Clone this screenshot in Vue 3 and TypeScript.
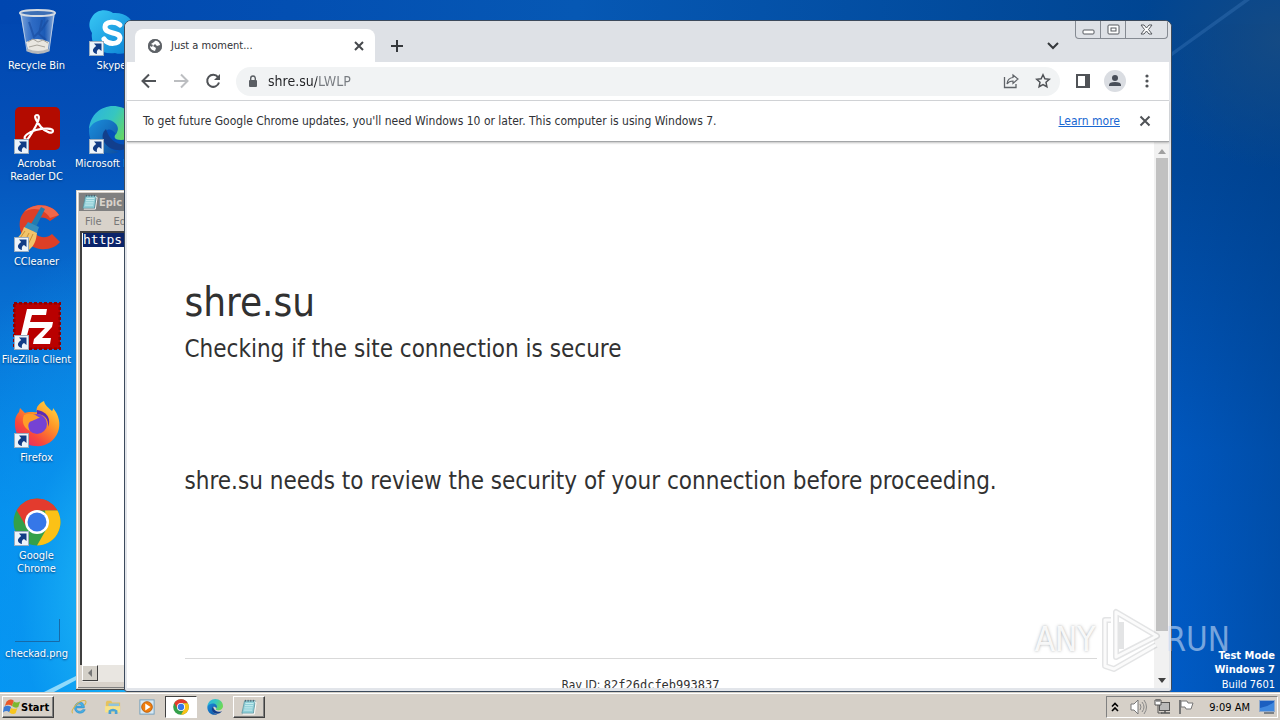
<script setup lang="ts">
import { ref } from 'vue'

interface Shortcut {
  label: string
  icon: string
  arrow: boolean
}

const columns: Shortcut[][] = [
  [
    { label: 'Recycle Bin', icon: 'bin', arrow: false },
    { label: 'Acrobat Reader DC', icon: 'acrobat', arrow: true },
    { label: 'CCleaner', icon: 'ccleaner', arrow: true },
    { label: 'FileZilla Client', icon: 'filezilla', arrow: true },
    { label: 'Firefox', icon: 'firefox', arrow: true },
    { label: 'Google Chrome', icon: 'chrome', arrow: true },
    { label: 'checkad.png', icon: 'blank', arrow: false },
  ],
  [
    { label: 'Skype', icon: 'skype', arrow: true },
    { label: 'Microsoft Edge', icon: 'edge', arrow: true },
  ],
]

const quickLaunch = [
  { name: 'Internet Explorer', icon: 'ie', state: '' },
  { name: 'Windows Explorer', icon: 'folder', state: '' },
  { name: 'Windows Media Player', icon: 'media', state: '' },
  { name: 'Google Chrome', icon: 'chrome', state: 'pressed' },
  { name: 'Microsoft Edge', icon: 'edge', state: '' },
  { name: 'Notepad', icon: 'notepad', state: 'raised' },
]

const address = ref('shre.su/LWLP')
const note = ref('https')
</script>

<template>
  <svg class="defs" width="0" height="0" aria-hidden="true">
    <defs>
      <linearGradient id="gGlass" x1="0" x2="1" y1="0" y2="0">
        <stop offset="0" stop-color="#a9c4e6" stop-opacity=".8" />
        <stop offset=".35" stop-color="#5c8fd8" stop-opacity=".5" />
        <stop offset=".7" stop-color="#2d66b8" stop-opacity=".6" />
        <stop offset="1" stop-color="#c3d6ee" stop-opacity=".8" />
      </linearGradient>
      <linearGradient id="gEdge" x1="0" x2="1" y1="0" y2=".4">
        <stop offset="0" stop-color="#2bb0e4" />
        <stop offset=".55" stop-color="#36c6c0" />
        <stop offset="1" stop-color="#6bd85a" />
      </linearGradient>
      <linearGradient id="gEdgeB" x1="0" x2="1" y1="0" y2="1">
        <stop offset="0" stop-color="#1b8fdc" />
        <stop offset="1" stop-color="#0f4fa0" />
      </linearGradient>
      <linearGradient id="gFox" x1="1" x2=".2" y1="0" y2="1">
        <stop offset="0" stop-color="#ffe84a" />
        <stop offset=".4" stop-color="#ff9a28" />
        <stop offset=".75" stop-color="#f8483c" />
        <stop offset="1" stop-color="#e4286a" />
      </linearGradient>
      <linearGradient id="gSkype" x1="0" x2="1" y1="0" y2="1">
        <stop offset="0" stop-color="#38c8f4" />
        <stop offset="1" stop-color="#0a80d4" />
      </linearGradient>
      <symbol id="i-bin" viewBox="0 0 48 48">
        <path d="M7 5h35l-6 37q-11 5-22 0z" fill="url(#gGlass)" />
        <path d="M13 34q11-6 23 0l-1 8q-10 4-20 0z" fill="#e9e6e0" />
        <path d="M15 34l5-3 5 3 5-2 5 3M16 39l8-2 8 2" fill="none" stroke="#a8a49c" />
        <path d="M16 14l5 15 8-8 6-9M29 12l-3 14 7 6" stroke="#174a9d" stroke-width="2" fill="none" opacity=".6" />
        <ellipse cx="24.500" cy="5" rx="17.500" ry="3" fill="#3d6fb5" stroke="#d5dbe2" stroke-width="2" />
        <path d="M8 6l6 37M41 6l-5 37" stroke="#cfdbea" opacity=".8" />
        <path d="M14 42q11 5 22 0" fill="none" stroke="#b7b9bb" stroke-width="3" />
      </symbol>
      <symbol id="i-acrobat" viewBox="0 0 48 48">
        <rect x="2" y="1" width="45" height="43" rx="5" fill="#b30b00" />
        <path d="M12 33c-2-2 3-7 11-9s17-2 17 1-7 2-12-4-8-12-4-12 1 8-4 16-6 10-8 8z" fill="none" stroke="#fff" stroke-width="2.200" />
      </symbol>
      <symbol id="i-ccleaner" viewBox="0 0 48 48">
        <path d="M46 11C39-1 20-2 11 8 1 19 9 42 27 45c9 1 16-2 20-7l-8-8c-7 6-17 3-19-5-2-9 8-16 17-8z" fill="#dc3f27" />
        <path d="M46 11C39-1 20-2 11 8c8-5 20-4 26 6z" fill="#f0674a" />
        <path d="M28 3l4 2-9 18-5-3z" fill="#227cb1" />
        <path d="M15 18l11 5-2 6-13-5z" fill="#368fbe" />
        <path d="M11 23l13 6c-1 7-2 12-8 17-7 0-12-5-15-10 5-2 8-7 10-13z" fill="#f2c469" />
        <path d="M12 27l-7 10M16 29l-6 12M20 30l-6 13" stroke="#c98f35" />
      </symbol>
      <symbol id="i-filezilla" viewBox="0 0 48 48">
        <rect x="1" y="1" width="46" height="46" fill="#b90000" stroke="#8f0000" stroke-width="3" stroke-dasharray="3 2" />
        <path d="M14 7h20l-1 6H19l-2 7h11l-2 6H16l-4 15H6z" fill="#fff" />
        <path d="M26 20h14l-1 5-10 11h9l-1 6H20l1-5 11-11h-7z" fill="#fff" />
      </symbol>
      <symbol id="i-firefox" viewBox="0 0 48 48">
        <path d="M31 1c1 5 5 7 8 10 1-1 1-2 1-3 6 7 8 16 5 24-4 10-13 15-23 14C9 45 1 34 2 22c0-5 2-8 4-10l1-4 5 5c5-2 10 0 12-1-2-5 3-9 7-11z" fill="url(#gFox)" />
        <circle cx="24" cy="24" r="10" fill="#7542d4" />
        <path d="M11 15c7-3 12 0 16 3-3 0-5 2-8 3-5 1-4 7-2 10-6-3-9-9-6-16z" fill="#ff9d28" />
        <path d="M24 14c7 0 12 5 11 13 3-6 1-15-11-17z" fill="#5c2bb5" />
      </symbol>
      <symbol id="i-chrome" viewBox="0 0 48 48">
        <circle cx="24" cy="24" r="23.500" fill="#34a04a" />
        <path d="M3.700 12.200A23.500 23.500 0 0 1 44.500 12.500H24L14 30z" fill="#e33b2e" />
        <path d="M44.500 12.500A23.500 23.500 0 0 1 24 47.500L34 30l-2-17.500z" fill="#fbc116" />
        <circle cx="24" cy="24" r="12" fill="#fff" />
        <circle cx="24" cy="24" r="9.500" fill="#3677e8" />
      </symbol>
      <symbol id="i-blank" viewBox="0 0 48 48">
        <path d="M2 45.500H46.500V23" fill="none" stroke="#176aa8" stroke-width="1" />
      </symbol>
      <symbol id="i-skype" viewBox="0 0 48 48">
        <path d="M4 9C9 1 19 1 25 5c14-1 23 8 21 21 4 12-7 23-19 19C12 47 2 37 4 25 0 19 1 13 4 9z" fill="url(#gSkype)" />
        <path d="M32 17c-4-4-15-4-15 2 0 8 15 4 15 11 0 7-12 7-16 1" fill="none" stroke="#fff" stroke-width="5" stroke-linecap="round" />
      </symbol>
      <symbol id="i-edge" viewBox="0 0 48 48">
        <path d="M1 23C2 9 13 0 25 0c13 0 23 9 23 21 0 8-7 13-15 13-6 0-8-3-5-6 5-9-8-20-27-5z" fill="url(#gEdge)" />
        <path d="M1 23c5-10 20-13 27-5 3 4 2 7 0 10-3-4-7-6-10-3-7 8 3 20 13 21C14 52 0 39 1 23z" fill="url(#gEdgeB)" />
        <path d="M18 23c-8 7-1 20 11 21 7 1 13-3 16-8-11 6-23 1-27-13z" fill="#123f8c" />
      </symbol>
      <symbol id="i-ie" viewBox="0 0 18 18">
        <path d="M15 10H6c0 4 5 5 7 2h3c-2 6-12 5-12-2 0-8 12-9 11 0zM6 8h6c-1-3-5-3-6 0z" fill="#47aee3" stroke="#2386c7" stroke-width=".6" fill-rule="evenodd" />
        <path d="M2 16c-4-3 8-16 14-14 2 1 0 4-1 5" fill="none" stroke="#d9b54a" stroke-width="1.200" />
      </symbol>
      <symbol id="i-folder" viewBox="0 0 18 18">
        <path d="M1 4l1-2h5l1 2h9v11H1z" fill="#e6c25c" />
        <path d="M4 5h12v4H4z" fill="#8fc3de" />
        <path d="M0 8h17v7H0z" fill="#f7e28a" />
        <path d="M4 17v-4q5-4 10 0v4h-3v-3H7v3z" fill="#4aa3d6" />
      </symbol>
      <symbol id="i-media" viewBox="0 0 18 18">
        <rect x="1" y="1" width="16" height="16" fill="#d6e8f4" stroke="#6d9bb9" />
        <circle cx="9" cy="9" r="6" fill="#ef7d0c" stroke="#b85d0b" />
        <path d="M7 5l6 4-6 4z" fill="#fff" />
      </symbol>
      <symbol id="i-notepad" viewBox="0 0 18 18">
        <path d="M4 2h12l-2 14H1z" fill="#8fced7" stroke="#4a8794" stroke-width=".7" />
        <path d="M5 5h9M4.500 7.500h9M4 10h9M3.500 12.500h9" stroke="#cff0f3" />
        <path d="M15 3l2 1-2 13H2" fill="none" stroke="#fff" />
        <path d="M5 1v2M8 1v2M11 1v2M14 1v2" stroke="#456" />
      </symbol>
      <symbol id="i-arrow" viewBox="0 0 15 15">
        <rect x=".5" y=".5" width="14" height="14" fill="#edf4fa" stroke="#9badc0" />
        <path d="M5 2.500h7.500v7.500L10 8C8 9 7.500 10.500 8 13 3 12 2.500 8 7.200 5z" fill="#123c85" />
      </symbol>
      <symbol id="i-flag" viewBox="0 0 20 20">
        <path d="M4 4q4-4 8-1l-2 6q-4-3-8 0z" fill="#e9582a" />
        <path d="M12 4q3 2 7 0l-2 6q-3 2-7-1z" fill="#7cb82f" />
        <path d="M1 10q4-3 8 0l-2 6q-3-3-7 0z" fill="#3a7bd5" />
        <path d="M9 11q4 2 7 0l-2 6q-3 2-7-1z" fill="#f7c51e" />
      </symbol>
    </defs>
  </svg>

  <div class="screen">
    <main class="desktop">
      <svg class="rays" viewBox="0 0 1280 692" preserveAspectRatio="none" aria-hidden="true">
        <path d="M44 692L80 674V678L54 692z" fill="#c9f4ff" opacity=".7" />
        <path d="M1172 52L1244 0h6L1172 56z" fill="#4a86c8" opacity=".3" />
      </svg>
      <div class="icons">
        <div v-for="(col, c) in columns" :key="c" class="icon-col">
          <a v-for="item in col" :key="item.label" class="shortcut" href="#">
            <span class="pic">
              <svg width="48" height="48"><use :href="'#i-' + item.icon" /></svg>
              <svg v-if="item.arrow" class="overlay" width="15" height="15"><use href="#i-arrow" /></svg>
            </span>
            <span class="label" :class="{ one: c === 1 }">{{ item.label }}</span>
          </a>
        </div>
      </div>

      <section class="notepad" aria-label="Notepad">
        <div class="np-title">
          <svg width="16" height="16"><use href="#i-notepad" /></svg>
          <span>Epic</span>
        </div>
        <div class="np-menu"><button>File</button><button>Edit</button></div>
        <textarea v-model="note" aria-label="Document text" spellcheck="false"></textarea>
        <div class="np-scroll">
          <button aria-label="Scroll left"><svg width="8" height="8" viewBox="0 0 8 8"><path d="M6 0v8L2 4z" fill="#777" /></svg></button>
        </div>
      </section>

      <section class="browser" aria-label="Browser">
        <header class="tabstrip">
          <div class="tab">
            <svg width="16" height="16" viewBox="0 0 16 16">
              <circle cx="8" cy="8" r="7" fill="#5f6368" />
              <path d="M9 2q4 1 4 5l-3 1-2-2-2 2 3 2-1 3Q3 12 3 8l2 1 1-2-2-1 3-2z" fill="#fff" />
              <circle cx="8" cy="8" r="6.200" fill="none" stroke="#5f6368" stroke-width="1.600" />
            </svg>
            <span class="tab-title">Just a moment...</span>
            <button class="plain" aria-label="Close tab"><svg width="10" height="10" viewBox="0 0 10 10"><path d="M1 1l8 8M9 1l-8 8" stroke="#45484c" stroke-width="2" /></svg></button>
          </div>
          <button class="plain new" aria-label="New tab"><svg width="14" height="14" viewBox="0 0 14 14"><path d="M7 1v12M1 7h12" stroke="#35383c" stroke-width="2" /></svg></button>
          <button class="plain search" aria-label="Search tabs"><svg width="12" height="8" viewBox="0 0 12 8"><path d="M1 1l5 5 5-5" stroke="#35383c" stroke-width="2" fill="none" /></svg></button>
          <div class="caption">
            <button aria-label="Minimize"><svg width="13" height="13" viewBox="0 0 13 13"><rect x="1" y="7" width="11" height="4" rx="1" fill="#fff" stroke="#55585e" /></svg></button>
            <button aria-label="Maximize"><svg width="13" height="13" viewBox="0 0 13 13"><rect x="1" y="2" width="11" height="9" rx="1" fill="#fff" stroke="#55585e" /><rect x="4" y="5" width="5" height="3" fill="#fff" stroke="#55585e" /></svg></button>
            <button class="wide" aria-label="Close"><svg width="13" height="13" viewBox="0 0 13 13"><path d="M1 2h3l2.500 3L9 2h3L8.500 6.500 12 11H9L6.500 8 4 11H1l3.500-4.500z" fill="#fff" stroke="#55585e" /></svg></button>
          </div>
        </header>

        <nav class="toolbar">
          <button class="plain" aria-label="Back"><svg width="16" height="16" viewBox="0 0 16 16"><path d="M15 8H2M8 1.500L1.500 8 8 14.500" stroke="#505357" stroke-width="2" fill="none" /></svg></button>
          <button class="plain" aria-label="Forward"><svg width="16" height="16" viewBox="0 0 16 16"><path d="M1 8h13M8 1.500L14.500 8 8 14.500" stroke="#bcbec1" stroke-width="2" fill="none" /></svg></button>
          <button class="plain" aria-label="Reload"><svg width="16" height="16" viewBox="0 0 16 16"><path d="M13 4.200A6 6 0 1 0 14 9.500" stroke="#505357" stroke-width="2" fill="none" /><path d="M15 1v6H9z" fill="#505357" /></svg></button>
          <div class="omnibox">
            <svg width="10" height="13" viewBox="0 0 10 13"><rect x="1" y="5" width="8" height="7" rx="1" fill="#5a5e63" /><path d="M2.700 5V3.300a2.300 2.300 0 0 1 4.600 0V5" fill="none" stroke="#5a5e63" stroke-width="1.400" /></svg>
            <input v-model="address" type="text" aria-label="Address" />
            <button class="plain" aria-label="Share"><svg width="16" height="16" viewBox="0 0 16 16"><path d="M1.500 4v10.500H13V11" fill="none" stroke="#5f6368" stroke-width="1.300" /><path d="M10 2l5 4-5 4.500V8q-4 0-6 3 .5-6 6-6.500z" fill="none" stroke="#5f6368" stroke-width="1.200" /></svg></button>
            <button class="plain" aria-label="Bookmark"><svg width="16" height="16" viewBox="0 0 16 16"><path d="M8 1.800l1.900 4 4.400.5-3.300 3 .9 4.400L8 11.500l-3.900 2.200.9-4.400-3.300-3 4.400-.5z" fill="none" stroke="#505357" stroke-width="1.500" /></svg></button>
          </div>
          <button class="plain" aria-label="Side panel"><svg width="16" height="16" viewBox="0 0 16 16"><path d="M1 1h14v14H1zM3 3v10h7V3z" fill="#505357" fill-rule="evenodd" /></svg></button>
          <button class="plain avatar" aria-label="Profile"><svg width="22" height="22" viewBox="0 0 22 22"><circle cx="11" cy="11" r="11" fill="#dadde2" /><circle cx="11" cy="8" r="3" fill="#484e58" /><path d="M5 16v-1q0-3 6-3t6 3v1z" fill="#484e58" /></svg></button>
          <button class="plain" aria-label="Menu"><svg width="16" height="16" viewBox="0 0 16 16"><circle cx="8" cy="3" r="1.600" fill="#505357" /><circle cx="8" cy="8" r="1.600" fill="#505357" /><circle cx="8" cy="13" r="1.600" fill="#505357" /></svg></button>
        </nav>

        <div class="infobar">
          <p>To get future Google Chrome updates, you'll need Windows 10 or later. This computer is using Windows 7.</p>
          <a href="#">Learn more</a>
          <button class="plain" aria-label="Dismiss"><svg width="12" height="12" viewBox="0 0 12 12"><path d="M1.500 1.500l9 9M10.500 1.500l-9 9" stroke="#505357" stroke-width="2" /></svg></button>
        </div>

        <div class="viewport">
          <article class="page">
            <h1>shre.su</h1>
            <h2>Checking if the site connection is secure</h2>
            <p class="review">shre.su needs to review the security of your connection before proceeding.</p>
            <footer>Ray ID: <code>82f26dcfeb993837</code></footer>
          </article>
          <div class="scrollbar" aria-hidden="true">
            <svg width="8" height="5" viewBox="0 0 8 5"><path d="M0 5l4-5 4 5z" fill="#a0a0a0" /></svg>
            <div class="thumb"></div>
            <svg width="8" height="5" viewBox="0 0 8 5"><path d="M0 0l4 5 4-5z" fill="#404040" /></svg>
          </div>
        </div>
      </section>

      <div class="brand">
        <span>ANY</span>
        <svg width="62" height="64" viewBox="0 0 62 64">
          <g fill="none" stroke="#8e9399" stroke-opacity=".25" stroke-width="6" stroke-linejoin="round">
            <path d="M17 4v45l41-21zM22 14v27" />
            <path d="M12 12H6v46l9 3 42-24" />
          </g>
          <g fill="none" stroke="#fff" stroke-opacity=".85" stroke-width="3" stroke-linejoin="round">
            <path d="M17 4v45l41-21z" />
            <path d="M12 12H6v46l9 3 42-24" />
          </g>
        </svg>
        <span class="on-blue">RUN</span>
      </div>
      <div class="build"><b>Test Mode</b><b>Windows 7</b><span>Build 7601</span></div>
    </main>

    <footer class="taskbar">
      <button class="start"><svg width="18" height="18"><use href="#i-flag" /></svg>Start</button>
      <div class="quick">
        <button v-for="q in quickLaunch" :key="q.name" :class="q.state" :aria-label="q.name">
          <svg width="16" height="16"><use :href="'#i-' + q.icon" /></svg>
        </button>
      </div>
      <div class="tray">
        <button class="plain" aria-label="Show hidden icons"><svg width="8" height="10" viewBox="0 0 8 10"><path d="M1 4.500l3-3 3 3M1 9l3-3 3 3" fill="none" stroke="#000" stroke-width="1.600" /></svg></button>
        <svg width="17" height="16" viewBox="0 0 17 16"><path d="M1 5h3l4-4v14l-4-4H1z" fill="#fff" stroke="#777" /><path d="M10 5q2 3 0 6M12 3q4 5 0 10M14 1q5 7 0 14" fill="none" stroke="#888" /></svg>
        <svg width="17" height="16" viewBox="0 0 17 16"><rect x="5.500" y="3.500" width="10" height="8" fill="#b9b9b9" stroke="#555" /><path d="M7 14h9M11 12v2" stroke="#555" stroke-width="1.500" /><path d="M1 1h6v5H1z" fill="#fff" stroke="#555" /><path d="M3 0v3M5 0v3M4 6v8h4" fill="none" stroke="#555" /></svg>
        <svg width="16" height="16" viewBox="0 0 16 16"><path d="M2 1v14" stroke="#777" stroke-width="2" /><path d="M3 2h6l1 2h5l-2 6H8L7 8H3z" fill="#fff" stroke="#777" /></svg>
        <time>9:09 AM</time>
        <svg width="16" height="14" viewBox="0 0 16 14"><rect x=".5" y=".5" width="15" height="11" fill="#1b5fc0" stroke="#8fa9cc" /><path d="M1 8q8-1 14-6v9H1z" fill="#3f88de" /><path d="M5 13h10" stroke="#234" /></svg>
      </div>
    </footer>
  </div>
</template>

<style>
body {
  margin: 0;
}
</style>

<style scoped>
.defs {
  position: absolute;
}
.screen {
  display: flex;
  flex-direction: column;
  height: 100vh;
  overflow: hidden;
  font-family: Tahoma, "DejaVu Sans Condensed", "Noto Sans", sans-serif;
  font-size: 11px;
  line-height: 13px;
}
button {
  font: inherit;
  border: 0;
  padding: 0;
  margin: 0;
}
button svg,
.pic svg {
  display: block;
}
.plain {
  display: flex;
  align-items: center;
  justify-content: center;
  min-width: 16px;
  height: 16px;
  background: none;
}
.desktop {
  position: relative;
  flex: 1;
  min-height: 0;
  background:
    radial-gradient(ellipse 140px 130px at 100% 40px, #144a84 0, rgba(0, 67, 146, 0) 100%),
    radial-gradient(ellipse 220px 360px at 130px 600px, #22bdf6 0, rgba(12, 150, 238, 0.6) 50%, rgba(0, 120, 220, 0) 100%),
    linear-gradient(90deg, #0046b0 0, #0658b4 45%, #004592 90%) left top / 100% 24px no-repeat,
    linear-gradient(180deg, #0046b0 0, #0450b8 20%, #0874d6 48%, #028ff0 75%, #0096f6 100%) left top / 50% 100% no-repeat,
    linear-gradient(90deg, rgba(0, 66, 146, 0) 91%, rgba(0, 60, 130, 0.4) 100%),
    linear-gradient(180deg, #004592 0, #00479a 25%, #0058c0 65%, #005cc8 100%);
}
.rays {
  position: absolute;
  inset: 0;
  width: 100%;
  height: 100%;
}
.icons {
  position: absolute;
  inset: 0;
  display: flex;
  gap: 2px;
}
.icon-col {
  display: flex;
  flex-direction: column;
  width: 73px;
}
.shortcut {
  display: flex;
  flex-direction: column;
  align-items: center;
  gap: 3px;
  height: 90px;
  padding-top: 8px;
  color: #fff;
  text-align: center;
  text-decoration: none;
  text-shadow: 0 1px 2px #003a78;
}
.pic {
  position: relative;
}
.overlay {
  position: absolute;
  left: 1px;
  bottom: 0;
}
.label {
  max-width: 72px;
}
.label.one {
  max-width: none;
  white-space: nowrap;
}
.notepad {
  position: absolute;
  left: 76px;
  top: 190px;
  bottom: 3px;
  width: 90px;
  box-sizing: border-box;
  display: flex;
  flex-direction: column;
  padding: 2px;
  background: #d8d2ca;
  border: 1px solid #d4d0c8;
  box-shadow: inset 1px 1px #fff, inset 0 -1px #808080, 0 1px #404040;
}
.np-title {
  display: flex;
  align-items: center;
  gap: 1px;
  height: 18px;
  padding-left: 3px;
  background: #808080;
  color: #d8d2ca;
  font-weight: bold;
}
.np-menu {
  display: flex;
  gap: 12px;
  height: 20px;
  padding-left: 6px;
}
.np-menu button {
  background: none;
  color: #777;
}
.notepad textarea {
  flex: 1;
  min-height: 0;
  margin: 0 0 0 1px;
  padding: 0 1px;
  border: 0;
  border-left: 2px solid #404040;
  border-top: 2px solid #404040;
  border-radius: 0;
  outline: 0;
  resize: none;
  overflow: hidden;
  background: #fff linear-gradient(#0a246a, #0a246a) 1px 0 / 100% 14px no-repeat;
  color: #fff;
  font: 13px/13px "DejaVu Sans Mono", monospace;
}
.np-scroll {
  height: 17px;
  margin: 0 0 4px 3px;
  background: #e9e6e1;
}
.np-scroll button {
  display: grid;
  place-items: center;
  width: 16px;
  height: 16px;
  background: #d4d0c8;
  border: 1px solid;
  border-color: #fff #404040 #404040 #fff;
}
.browser {
  position: absolute;
  left: 124px;
  right: 108px;
  top: 20px;
  bottom: 0;
  box-sizing: border-box;
  display: flex;
  flex-direction: column;
  padding: 0 2px 3px;
  background: #e2e5ea;
  border: 1px solid #3c4a5c;
  border-radius: 7px 7px 3px 3px;
  overflow: hidden;
}
.tabstrip {
  display: flex;
  height: 41px;
  margin: 0 -2px;
  background: #dee1e6;
}
.tab {
  display: flex;
  align-items: center;
  gap: 8px;
  width: 240px;
  height: 33px;
  margin: 8px 0 0 10px;
  padding: 0 8px 0 12px;
  box-sizing: border-box;
  background: #fff;
  border-radius: 8px 8px 0 0;
  color: #303236;
}
.tab-title {
  flex: 1;
}
.new {
  margin: 17px 0 0 14px;
}
.search {
  margin: 17px 14px 0 auto;
}
.caption {
  display: flex;
  height: 17px;
  margin-right: 3px;
  border: 1px solid #858a92;
  border-top: 0;
  border-radius: 0 0 4px 4px;
}
.caption button {
  display: grid;
  place-items: center;
  width: 25px;
  background: none;
  border-right: 1px solid #858a92;
}
.caption .wide {
  width: 41px;
  border-right: 0;
}
.toolbar {
  display: flex;
  align-items: center;
  gap: 16px;
  height: 38px;
  padding: 0 14px;
  background: #fff;
  border-bottom: 1px solid #d4d6d9;
}
.omnibox {
  flex: 1;
  display: flex;
  align-items: center;
  gap: 10px;
  height: 29px;
  padding: 0 9px 0 12px;
  margin: 0 -1px;
  border-radius: 15px;
  background: #f1f3f4;
}
.omnibox input {
  flex: 1;
  min-width: 0;
  padding: 0;
  border: 0;
  outline: 0;
  font: 14px/20px Tahoma, "DejaVu Sans Condensed", "Noto Sans", sans-serif;
  color: transparent;
  background: linear-gradient(90deg, #202124 49px, #777b80 49px) text;
}
.omnibox button + button {
  margin-left: 6px;
}
.avatar {
  width: 22px;
  margin: 0 -3px;
}
.infobar {
  position: relative;
  display: flex;
  align-items: center;
  gap: 17px;
  height: 40px;
  padding: 0 16px;
  background: #fff;
  border-bottom: 1px solid #a4a6a8;
  box-shadow: 0 1px 2px rgba(0, 0, 0, 0.25);
  color: #303236;
  font-size: 12px;
  line-height: 16px;
}
.infobar p {
  flex: 1;
  margin: 0;
  white-space: nowrap;
}
.infobar a {
  color: #1967d2;
}
.viewport {
  flex: 1;
  min-height: 0;
  display: flex;
  overflow: hidden;
  background: #fff;
}
.page {
  flex: 1;
  max-width: 912px;
  margin: 0 auto;
  padding: 136px 57px 0;
  color: #313131;
}
h1 {
  margin: 0;
  font-size: 40px;
  line-height: 48px;
  font-weight: 400;
}
h2 {
  margin: 5px 0 0;
  font-size: 24px;
  line-height: 36px;
  font-weight: 400;
}
.review {
  margin: 96px 0 0;
  font-size: 24px;
  line-height: 36px;
}
.page footer {
  margin-top: 159px;
  padding-top: 17px;
  border-top: 1px solid #d9d9d9;
  text-align: center;
  font-size: 12px;
  line-height: 18px;
}
.page code {
  font: 12px/18px "DejaVu Sans Mono", monospace;
}
.scrollbar {
  width: 15px;
  display: flex;
  flex-direction: column;
  align-items: center;
  gap: 4px;
  padding: 7px 0 5px;
  box-sizing: border-box;
  background: #f1f1f1;
}
.thumb {
  width: 12px;
  flex: 1;
  margin-bottom: 43px;
  background: #c1c1c1;
}
.build {
  position: absolute;
  right: 5px;
  bottom: 0;
  display: flex;
  flex-direction: column;
  align-items: flex-end;
  color: #fff;
  line-height: 14px;
}
.build span {
  line-height: 15px;
}
.brand {
  position: absolute;
  right: 50px;
  bottom: 20px;
  display: flex;
  align-items: center;
  gap: 4px;
  font: 33px/40px "DejaVu Sans Condensed", sans-serif;
  color: rgba(255, 255, 255, 0.9);
  text-shadow: 0 0 3px rgba(90, 95, 100, 0.5);
  pointer-events: none;
}
.brand .on-blue {
  color: rgba(200, 220, 245, 0.6);
  text-shadow: none;
}
.taskbar {
  display: flex;
  align-items: center;
  height: 28px;
  padding: 2px 2px 0;
  box-sizing: border-box;
  background: #d6d0c8;
  box-shadow: inset 0 1px #d4d0c8, inset 0 2px #fff;
}
.start {
  display: flex;
  align-items: center;
  width: 52px;
  height: 22px;
  box-sizing: border-box;
  background: #d6d0c8;
  border: 1px solid;
  border-color: #fff #404040 #404040 #fff;
  box-shadow: inset -1px -1px #808080;
  color: #000;
  font-weight: bold;
  font-size: 11px;
}
.quick {
  display: flex;
  flex: 1;
  gap: 2px;
  padding-left: 9px;
}
.quick button {
  display: grid;
  place-items: center;
  width: 32px;
  height: 22px;
  box-sizing: border-box;
  background: none;
  border: 1px solid transparent;
}
.quick .pressed {
  background: #fff;
  border-color: #404040 #fff #fff #404040;
}
.quick .raised {
  border-color: #fff #404040 #404040 #fff;
  box-shadow: inset -1px -1px #808080;
}
.tray {
  display: flex;
  align-items: center;
  gap: 7px;
  height: 22px;
  box-sizing: border-box;
  padding: 0 2px 0 0;
  border: 1px solid;
  border-color: #808080 #fff #fff #808080;
  color: #000;
}
.tray time {
  margin: 0 2px 0 8px;
}
</style>
